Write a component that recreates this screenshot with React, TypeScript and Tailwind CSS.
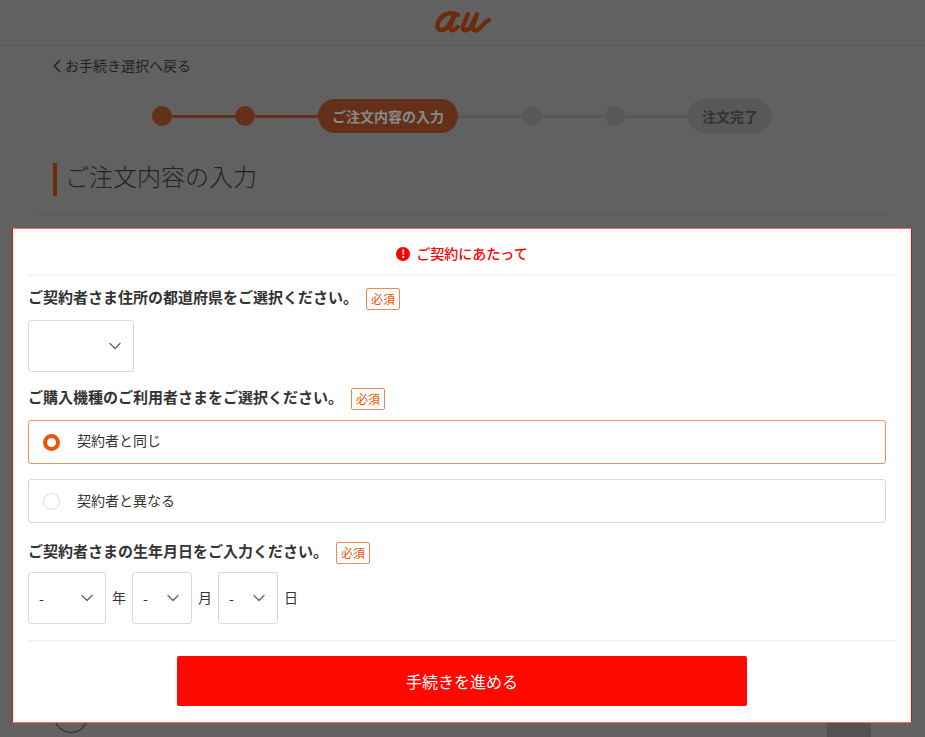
import { ChevronDown, ChevronLeft } from "lucide-react"

const font = "font-['Noto_Sans_CJK_JP','Noto_Sans',sans-serif]"

function Required() {
  return (
    <span className="ml-[8px] flex h-[22px] w-[34px] items-center justify-center rounded-[2px] border border-[#f08a4c] text-[12px] font-normal text-[#eb5505]">
      必須
    </span>
  )
}

function Question({ children }: { children: string }) {
  return (
    <div className="flex items-center">
      <span className="pb-[5px] text-[15px] font-bold leading-[16px] text-[#333]">{children}</span>
      <Required />
    </div>
  )
}

function SelectBox({ width, value }: { width: string; value?: string }) {
  return (
    <div className={`flex h-[52px] items-center justify-between rounded-[3px] border border-[#d9d9d9] bg-white pl-[10px] pr-[8px] text-[14px] text-[#333] ${width}`}>
      <span>{value}</span>
      <ChevronDown className="h-[20px] w-[20px] text-[#666]" strokeWidth={1.6} />
    </div>
  )
}

function Radio({ label, checked }: { label: string; checked?: boolean }) {
  return (
    <div className={`flex h-[44px] items-center rounded-[3px] border pl-[14px] ${checked ? "border-[#f2935c]" : "border-[#d9d9d9]"}`}>
      {checked ? (
        <span className="h-[17px] w-[17px] rounded-full border-[4px] border-[#eb5505]" />
      ) : (
        <span className="h-[17px] w-[17px] rounded-full border border-[#d9d9d9]" />
      )}
      <span className={`ml-[17px] text-[14px] text-[#333] ${checked ? "pb-[3px]" : "pb-[1px]"}`}>{label}</span>
    </div>
  )
}

export default function App() {
  return (
    <div className={`relative h-[737px] w-[925px] overflow-hidden bg-[#616161] ${font}`}>
      {/* dimmed page behind the modal */}
      <div className="flex h-[46px] items-center justify-center border-b border-[#5a5a5a]">
        <svg width="56" height="24" viewBox="0 0 56 24" className="mt-[-2px]">
          <path
            d="M23 5C14 0 4 6 2.500 15c-1 6 6 7 11 1L20 4l-4.500 12c-1.500 5 3 6 7 1M33 4l-5 12c-1.500 5 3 6 8 1l6-13-4 12c-1.500 5 3 6 7 2 2-2 5-6 9-8"
            fill="none"
            stroke="#6e2b0b"
            strokeWidth="4.4"
            strokeLinecap="round"
            strokeLinejoin="round"
          />
        </svg>
      </div>
      <div className="ml-[52px] mt-[9px] flex h-[21px] items-center text-[14px] leading-[21px] text-[#222]">
        <ChevronLeft className="ml-[-6px] mr-[-3px] h-[22px] w-[22px]" strokeWidth={1.5} />
        <span>お手続き選択へ戻る</span>
      </div>
      <div className="ml-[152px] mt-[23px] flex items-center">
        <span className="h-[20px] w-[20px] rounded-full bg-[#65301a]" />
        <span className="h-[3px] w-[63px] bg-[#65301a]" />
        <span className="h-[20px] w-[20px] rounded-full bg-[#65301a]" />
        <span className="h-[3px] w-[63px] bg-[#65301a]" />
        <span className="flex h-[34px] w-[140px] items-center justify-center rounded-full bg-[#65301a] text-[14px] font-bold text-[#8a8a8a]">
          ご注文内容の入力
        </span>
        <span className="h-[3px] w-[64px] bg-[#585858]" />
        <span className="h-[20px] w-[20px] rounded-full bg-[#585858]" />
        <span className="h-[3px] w-[63px] bg-[#585858]" />
        <span className="h-[20px] w-[20px] rounded-full bg-[#585858]" />
        <span className="h-[3px] w-[63px] bg-[#585858]" />
        <span className="flex h-[34px] w-[84px] items-center justify-center rounded-full bg-[#585858] text-[14px] font-bold text-[#333]">
          注文完了
        </span>
      </div>
      <div className="ml-[53px] mt-[30px] flex h-[33px] items-center border-l-[4px] border-[#6e2b0b] pb-[7px] pl-[8px] text-[24px] font-light text-[#222]">
        ご注文内容の入力
      </div>
      <div className="mx-[37px] mt-[18px] h-px bg-[#5a5a5a]" />

      {/* covered page content peeking out under the modal */}
      <div className="absolute left-[54px] top-[700px] h-[33px] w-[34px] rounded-full border border-[#222]" />
      <div className="absolute left-[827px] top-[718px] h-[19px] w-[44px] rounded-t-[2px] bg-[#525252]" />

      {/* modal */}
      <div className="absolute left-[12px] top-[228px] h-[495px] w-[900px] border border-[#f00] border-b-[#f56a6a] border-t-[#f56a6a] bg-white px-[15px]">
        <div className="flex h-[47px] items-center justify-center border-b-2 border-[#f5f5f5] pt-[4px] text-[14px] font-medium text-[#f00]">
          <span className="mr-[6px] flex h-[14px] w-[14px] items-center justify-center rounded-full bg-[#f00] text-[11px] font-bold leading-none text-white">
            !
          </span>
          ご契約にあたって
        </div>
        <div className="mt-[12px]">
          <Question>ご契約者さま住所の都道府県をご選択ください。</Question>
          <div className="mt-[10px]">
            <SelectBox width="w-[106px]" />
          </div>
        </div>
        <div className="mt-[16px]">
          <Question>ご購入機種のご利用者さまをご選択ください。</Question>
          <div className="mr-[10px] mt-[10px] flex flex-col gap-[15px]">
            <Radio label="契約者と同じ" checked />
            <Radio label="契約者と異なる" />
          </div>
        </div>
        <div className="mt-[19px]">
          <Question>ご契約者さまの生年月日をご入力ください。</Question>
          <div className="mt-[8px] flex items-center text-[14px] text-[#333]">
            <SelectBox width="w-[78px]" value="-" />
            <span className="w-[26px] pb-[2px] text-center">年</span>
            <SelectBox width="w-[60px]" value="-" />
            <span className="w-[26px] pb-[2px] text-center">月</span>
            <SelectBox width="w-[60px]" value="-" />
            <span className="ml-[6px] pb-[2px]">日</span>
          </div>
        </div>
        <div className="mt-[16px] h-[2px] bg-[#f5f5f5]" />
        <div className="mt-[14px] flex justify-center">
          <div className="flex h-[50px] w-[570px] items-center justify-center rounded-[2px] bg-[#ff0800] text-[16px] text-white">
            手続きを進める
          </div>
        </div>
      </div>
    </div>
  )
}
